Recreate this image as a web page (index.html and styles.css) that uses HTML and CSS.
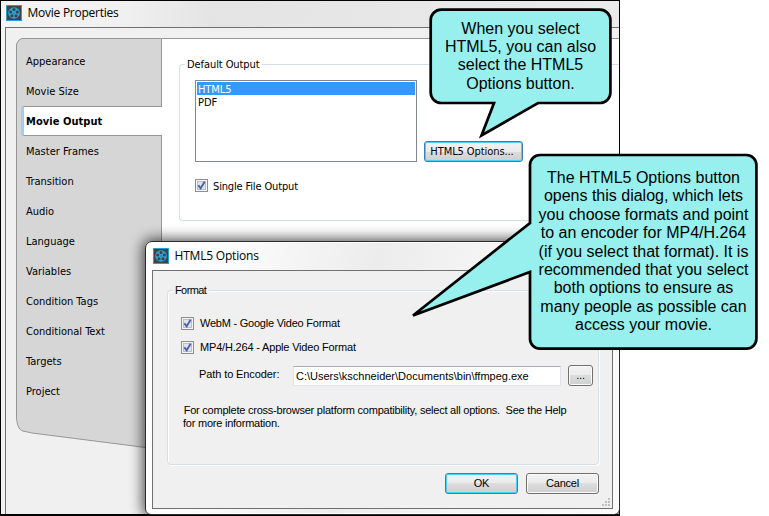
FILE: index.html
```html
<!DOCTYPE html>
<html lang="en">
<head>
<meta charset="utf-8">
<title>Movie Properties</title>
<link rel="stylesheet" href="styles.css">
</head>
<body>
<svg class="defs" width="0" height="0" aria-hidden="true">
  <symbol id="reel" viewBox="0 0 16 16">
    <rect x=".5" y=".5" width="15" height="15" fill="#41434a" stroke="#249fcf"/>
    <circle cx="8" cy="8" r="5.8" fill="#2da6d2"/>
    <g fill="#34434e">
      <circle cx="8" cy="4.6" r="1.5"/><circle cx="11.3" cy="7" r="1.5"/><circle cx="10" cy="10.8" r="1.5"/>
      <circle cx="6" cy="10.8" r="1.5"/><circle cx="4.7" cy="7" r="1.5"/><circle cx="8" cy="8" r=".6"/>
    </g>
  </symbol>
  <symbol id="check" viewBox="0 0 13 13">
    <rect x=".5" y=".5" width="12" height="12" fill="#f4f4f4" stroke="#8e8f8f"/>
    <rect x="2.5" y="2.5" width="8" height="8" fill="#dfe3ea" stroke="#b9bec7"/>
    <path d="M3.3 6.3 L5.6 9.4 L9.6 2.8" fill="none" stroke="#4660a6" stroke-width="1.9"/>
  </symbol>
</svg>

<main class="window">
  <header class="titlebar"><svg class="reel"><use href="#reel"/></svg><span>Movie Properties</span></header>
  <div class="client">
    <nav class="tabs">
      <svg class="tabs-shape" width="146" height="412" viewBox="0 0 146 412">
        <path d="M145.500 .5 H6 L3 2 L.5 6 V380 C1 386 2.500 392 7 393 L16 395 L145.500 411.500 Z" fill="#d6d6d6" stroke="#969696"/>
      </svg>
      <ul class="tab-list">
        <li>Appearance</li>
        <li>Movie Size</li>
        <li class="active"><span>Movie Output</span></li>
        <li>Master Frames</li>
        <li>Transition</li>
        <li>Audio</li>
        <li>Language</li>
        <li>Variables</li>
        <li>Condition Tags</li>
        <li>Conditional Text</li>
        <li>Targets</li>
        <li>Project</li>
      </ul>
    </nav>
    <section class="page">
      <fieldset class="output">
        <legend>Default Output</legend>
        <div class="output-row">
          <ul class="listbox"><li class="selected">HTML5</li><li>PDF</li></ul>
          <button class="btn focus opt">HTML5 Options...</button>
        </div>
        <label class="option"><svg class="check"><use href="#check"/></svg><span>Single File Output</span></label>
      </fieldset>
    </section>
  </div>
</main>

<section class="dialog">
  <header class="dialog-title"><svg class="reel"><use href="#reel"/></svg><span>HTML5 Options</span></header>
  <div class="dialog-body">
    <fieldset class="format">
      <legend>Format</legend>
      <label class="option"><svg class="check"><use href="#check"/></svg><span>WebM - Google Video Format</span></label>
      <label class="option"><svg class="check"><use href="#check"/></svg><span>MP4/H.264 - Apple Video Format</span></label>
      <div class="encoder">
        <span class="encoder-label">Path to Encoder:</span>
        <div class="field">C:\Users\kschneider\Documents\bin\ffmpeg.exe</div>
        <button class="btn browse">...</button>
      </div>
      <p class="note">&#8202;For complete cross-browser platform compatibility, select all options.&nbsp; See the Help<br>for more information.</p>
    </fieldset>
    <footer class="actions"><button class="btn focus">OK</button><button class="btn">Cancel</button></footer>
    <svg class="grip" width="9" height="9" viewBox="0 0 9 9"><path d="M6 0h2v2h-2z M3 3h2v2h-2z M6 3h2v2h-2z M0 6h2v2h-2z M3 6h2v2h-2z M6 6h2v2h-2z" fill="#bfbfbf"/></svg>
  </div>
</section>

<aside class="callout first">
  <svg class="bubble" width="184" height="132" viewBox="0 0 184 132">
    <path d="M12.200 1.700 H170.900 A10.500 10.500 0 0 1 181.400 12.200 V84.500 A10.500 10.500 0 0 1 170.900 95 H109 L52.500 127.500 L65 95 H12.200 A10.500 10.500 0 0 1 1.700 84.500 V12.200 A10.500 10.500 0 0 1 12.200 1.700 Z" fill="#97f0ed" stroke="#000" stroke-width="2.700"/>
  </svg>
  <p>When you select<br>HTML5, you can also<br>select the HTML5<br>Options button.</p>
</aside>

<aside class="callout second">
  <svg class="bubble" width="352" height="200" viewBox="0 0 352 200">
    <path d="M133 2 H339.400 A10 10 0 0 1 349.400 12 V185.700 A10 10 0 0 1 339.400 195.700 H133 A10 10 0 0 1 123 185.700 V119 L6 162.500 L123 70 V12 A10 10 0 0 1 133 2 Z" fill="#97f0ed" stroke="#000" stroke-width="2.700"/>
  </svg>
  <p>The HTML5 Options button<br>opens this dialog, which lets<br>you choose formats and point<br>to an encoder for MP4/H.264<br>(if you select that format). It is<br>recommended that you select<br>both options to ensure as<br>many people as possible can<br>access your movie.</p>
</aside>
</body>
</html>
```
FILE: styles.css
```css
* { box-sizing: border-box; }
body { margin: 0; width: 769px; height: 516px; position: relative; overflow: hidden; background: #fff; color: #000; font: 11px/13px "DejaVu Sans Condensed", "DejaVu Sans", sans-serif; }
ul, p, fieldset { margin: 0; padding: 0; list-style: none; }
.defs { position: absolute; }

.window { width: 620px; height: 516px; border: 1px solid #000; border-bottom-width: 2px; background: linear-gradient(100deg, #f4f4f4, #f0f0f0 18%, #e4e4e4 30%, #ececec); padding-left: 4px; overflow: hidden; }
.titlebar { height: 26px; display: flex; align-items: center; padding: 0 0 2px 1px; gap: 5.5px; font: 12px/18px "Open Sans", sans-serif; letter-spacing: -.25px; }
.reel { width: 16px; height: 16px; flex: none; }
.client { height: 487px; border: 1px solid #707070; border-width: 1px 0 0 1px; background: #f0f0f0; display: flex; padding: 10px 0 0 10px; }

.tabs { width: 146px; display: grid; flex: none; align-items: start; }
.tabs-shape, .tab-list { grid-area: 1 / 1; }
.tab-list { padding-top: 8px; }
.tab-list li { height: 30px; line-height: 31px; padding-left: 10px; }
.tab-list .active { margin-left: 5px; padding-left: 2px; background: #fff; border: 1px solid #969696; border-width: 1px 0; border-left: 3px solid #99ccff; border-radius: 3px 0 0 3px; font-weight: bold; line-height: 29px; letter-spacing: .05px; }

.page { flex: 1; min-width: 0; height: 412px; border-top: 1px solid #969696; background: #fff; padding: 19px 0 0 17px; }
fieldset { min-width: 0; border: 1px solid #d5dfe5; border-radius: 4px; }
legend { padding: 0 2px; line-height: 13px; }
.output { height: 163px; width: 500px; padding-left: 15px; border-right: 0; letter-spacing: -.08px; }
.output legend { margin-left: -10px; }
.output-row { display: flex; align-items: flex-end; gap: 7px; padding-top: 9px; }
.listbox { width: 222px; height: 82px; border: 1px solid #828790; padding: 1px; background: #fff; }
.listbox li { height: 13px; line-height: 15px; padding-left: 1px; }
.listbox .selected { background: #3399ff; color: #fff; }
.option { display: flex; align-items: center; gap: 5px; height: 13px; }
.output .option { margin-top: 17px; letter-spacing: -.15px; }
.output .option span { padding-top: 1px; }
.check { width: 13px; height: 13px; flex: none; }

.btn { display: flex; align-items: center; justify-content: center; width: 73px; height: 21px; padding: 0; border: 1px solid #707070; border-radius: 3px; background: linear-gradient(#f2f2f2 0, #ebebeb 50%, #dddddd 50%, #cfcfcf 100%); box-shadow: inset 0 0 0 1px #fafafa; color: #000; font: inherit; letter-spacing: inherit; white-space: nowrap; }
.btn.focus { border-color: #3c7fb1; box-shadow: inset 0 0 0 1px #46d0f8; }
.btn.opt { width: 99px; padding-right: 3px; }

.dialog { position: absolute; left: 145px; top: 241px; width: 475px; height: 274px; border: 1px solid #2b2b2b; border-radius: 7px 0 6px 6px; background: linear-gradient(100deg, #fff 0, #fbfbfb 18%, #ececec 45%, #f6f6f6 70%, #fafafa); box-shadow: inset 0 0 0 1px #fff, 0 0 14px 2px rgba(0,0,0,.7); padding: 0 6px; clip-path: inset(-24px 0 0 -24px); font: 11px/13px "Liberation Sans", sans-serif; letter-spacing: -.23px; }
.dialog-title { height: 28px; padding-left: 1px; display: flex; align-items: center; gap: 5.5px; font: 12px/18px "Open Sans", sans-serif; letter-spacing: -.2px; }
.dialog-body { height: 239px; border: 1px solid #707070; background: #f0f0f0; padding: 13px 13px 0 14px; position: relative; }
.format { height: 181px; padding: 20px 5px 0 13px; box-shadow: 1px 1px 0 #fff, inset 1px 1px 0 #fff; }
.format legend { margin-left: -8px; background: #f0f0f0; letter-spacing: -.6px; padding-right: 3px; }
.format .option { gap: 6px; }
.format .option + .option { margin-top: 11px; letter-spacing: -.18px; }
.encoder { display: flex; align-items: center; margin-top: 11px; padding-left: 18px; }
.encoder-label { width: 94px; padding-bottom: 2px; flex: none; letter-spacing: -.1px; }
.field { width: 268px; flex: none; height: 20px; border: 1px solid #e2e3ea; border-top-color: #abadb3; background: #fff; padding: 2px 0 0 2px; line-height: 14px; letter-spacing: 0; white-space: nowrap; }
.browse { width: 25px; flex: none; margin-left: 7px; }
.note { margin: 18px 0 0 2px; white-space: nowrap; }
.actions { display: flex; justify-content: flex-end; gap: 8px; padding-top: 8px; }
.grip { position: absolute; right: 1px; bottom: 1px; }

.callout { position: absolute; font: 16px/18.4px "Liberation Sans", sans-serif; text-align: center; white-space: nowrap; }
.bubble { position: absolute; left: 0; top: 0; }
.callout p { position: relative; }
.first { left: 429px; top: 8px; width: 183px; padding-top: 11.5px; }
.second { left: 407px; top: 153px; width: 352px; padding: 16px 0 0 121px; }
```
